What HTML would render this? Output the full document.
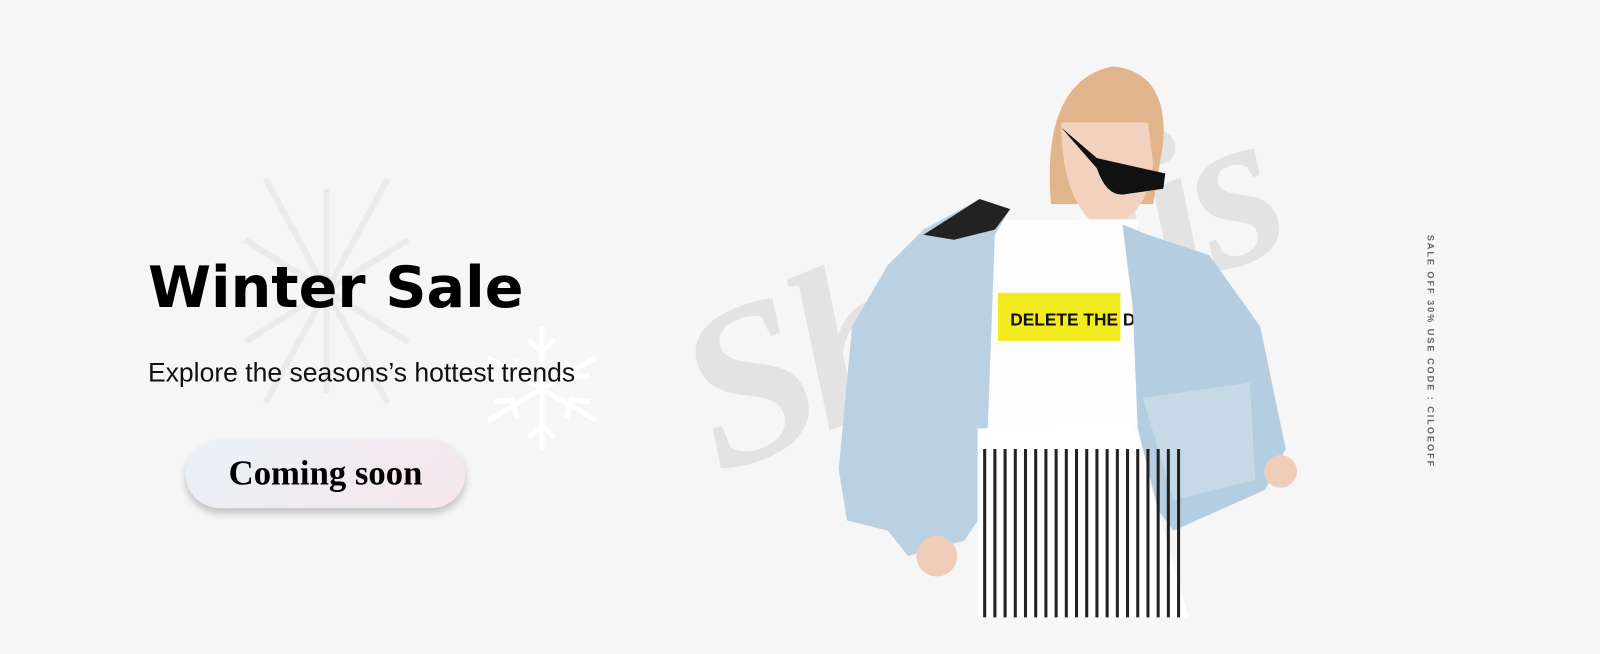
<!DOCTYPE html>
<html><head><meta charset="utf-8"><style>
html,body{margin:0;padding:0}
body{width:1600px;height:654px;background:#f6f6f6;position:relative;overflow:hidden;font-family:"Liberation Sans",sans-serif}
#wrap{position:absolute;left:0;top:0;width:1568px;height:641px;transform:scale(1.0204);transform-origin:0 0}
.t{position:absolute;left:145px;top:250px;font-family:"Comic Sans MS","DejaVu Sans",sans-serif;font-weight:bold;font-size:56px;color:#000;white-space:nowrap}
.s{position:absolute;left:145px;top:350px;font-size:26px;color:#111;white-space:nowrap}
.b{position:absolute;left:182px;top:431px;width:274px;height:67px;border-radius:34px;background:linear-gradient(135deg,#e9f1f5,#f6e6ec);box-shadow:0 5px 8px rgba(0,0,0,.22);text-align:center;line-height:67px;font-family:"Liberation Serif",serif;font-weight:bold;font-size:34px;color:#000}
.v{position:absolute;left:1398px;top:230px;transform-origin:0 0;transform:translateX(9px) rotate(90deg);font-size:9px;font-weight:bold;letter-spacing:1.9px;color:#666;white-space:nowrap}
.w{position:absolute;left:630px;top:280px;font-family:"Liberation Serif",serif;font-style:italic;font-weight:bold;font-size:220px;color:#e3e3e3;transform:rotate(-22deg);transform-origin:0 0;white-space:nowrap;letter-spacing:-10px}
</style></head><body><div id="wrap">
<svg style="position:absolute;left:230px;top:165px" width="180" height="240" viewBox="0 0 180 240" fill="none" stroke="#ebebeb" stroke-width="6">
<line x1="30" y1="10" x2="150" y2="230"/><line x1="150" y1="10" x2="30" y2="230"/><line x1="90" y1="20" x2="90" y2="220"/><line x1="10" y1="70" x2="170" y2="170"/><line x1="170" y1="70" x2="10" y2="170"/>
</svg>
<svg style="position:absolute;left:470px;top:318px" width="122" height="126" viewBox="0 0 122 126" stroke="#fff" stroke-width="5" fill="none">
<line x1="61" y1="2" x2="61" y2="124"/><line x1="8" y1="32" x2="114" y2="94"/><line x1="114" y1="32" x2="8" y2="94"/>
<path d="M48 15l13 12 13-12M48 111l13-12 13 12M14 50l18 2 5-18M108 50l-18 2-5-18M14 76l18-2 5 18M108 76l-18-2-5 18"/>
</svg>
<div class="w">Shopiis</div>
<svg style="position:absolute;left:815px;top:60px" width="470" height="550" viewBox="815 60 470 550">
<path d="M1030 200 Q1020 80 1090 65 Q1145 70 1140 140 L1130 200 Z" fill="#e2b48c"/>
<path d="M1040 120 Q1040 200 1080 225 Q1125 215 1130 160 L1125 120 Z" fill="#f2d2bf"/>
<path d="M1040 125 L1075 165 Q1085 195 1105 190 L1140 185 L1142 170 L1075 155 Z" fill="#111"/>
<path d="M965 215 L1115 215 L1130 420 L1120 500 L965 500 Z" fill="#fdfdfd"/>
<rect x="978" y="287" width="120" height="47" fill="#f2ec1f"/>
<text x="990" y="319" font-family="Liberation Sans,sans-serif" font-weight="bold" font-size="17" fill="#111">DELETE THE DRAMA</text>
<path d="M905 225 L960 195 L990 205 L975 230 L965 500 L945 530 L905 540 L890 545 L870 520 L830 510 L822 460 L835 320 L870 260 Z" fill="#b9d1e3"/>
<path d="M1100 220 L1125 230 L1185 250 L1235 320 L1260 440 L1240 480 L1150 520 L1135 500 L1115 420 L1110 300 Z" fill="#b4cde0"/>
<path d="M1120 390 L1225 375 L1230 470 L1150 490 Z" fill="#c6d9e7"/>
<path d="M905 230 L960 195 L990 205 L975 225 L935 235 Z" fill="#222"/>
<path d="M958 420 L1110 415 L1165 605 L958 605 Z" fill="#fff"/>
<g stroke="#222" stroke-width="3">
<path d="M965 440V605M975 440V605M985 440V605M995 440V605M1005 440V605M1015 440V605M1025 440V605M1035 440V605M1045 440V605M1055 440V605M1065 440V605M1075 440V605M1085 440V605M1095 440V605M1105 440V605M1115 440V605M1125 440V605M1135 440V605M1145 440V605M1155 440V605"/>
</g>
<circle cx="918" cy="545" r="20" fill="#f0cdb8"/>
<circle cx="1255" cy="462" r="16" fill="#f0cdb8"/>
</svg>
<div class="t">Winter Sale</div>
<div class="s">Explore the seasons’s hottest trends</div>
<div class="b">Coming soon</div>
<div class="v">SALE OFF 30% USE CODE : CILOEOFF</div>
</div></body></html>
